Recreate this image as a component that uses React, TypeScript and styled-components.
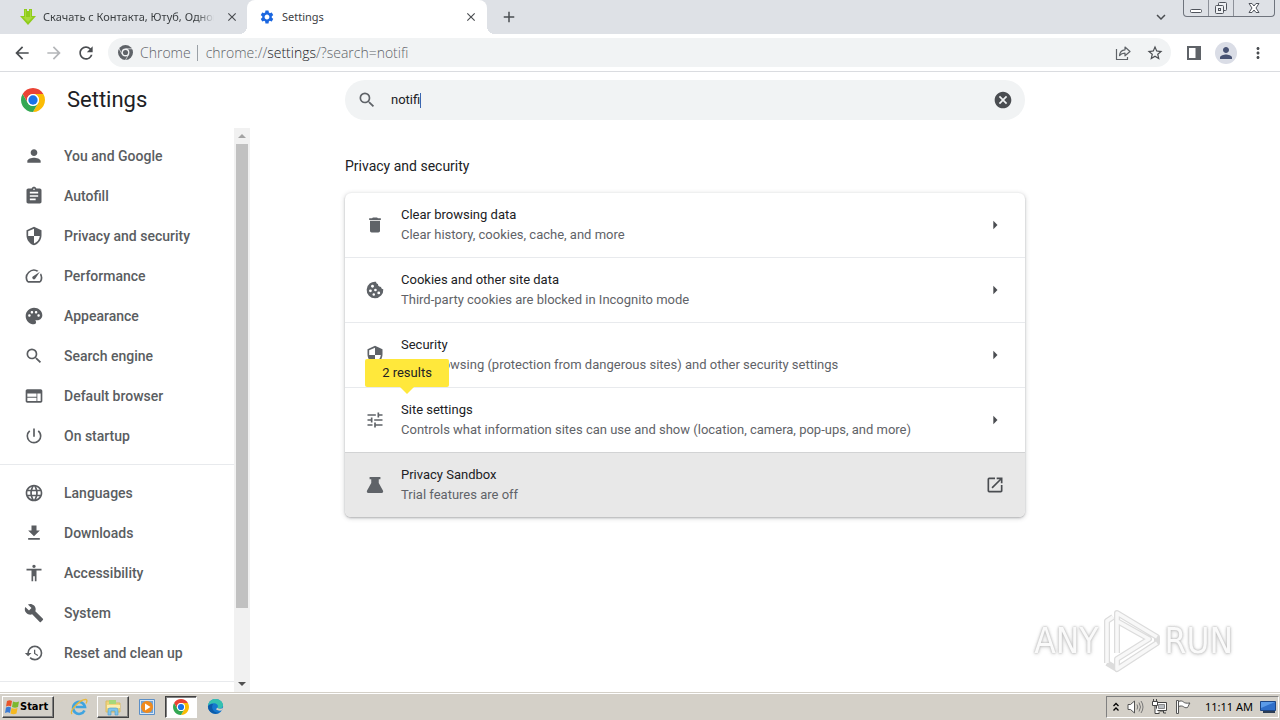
import React from "react";
import styled, { createGlobalStyle, css } from "styled-components";
import {
  MdAccessibility,
  MdAdd,
  MdArrowBack,
  MdArrowForward,
  MdArrowRight,
  MdAssignment,
  MdBuild,
  MdCancel,
  MdClose,
  MdDelete,
  MdExpandMore,
  MdFileDownload,
  MdHistory,
  MdLanguage,
  MdMoreVert,
  MdOpenInNew,
  MdPalette,
  MdPerson,
  MdPowerSettingsNew,
  MdRefresh,
  MdSearch,
  MdSecurity,
  MdSettings,
  MdSpeed,
  MdStarBorder,
  MdTune,
  MdWeb,
} from "react-icons/md";

const GlobalStyle = createGlobalStyle`
  *, *::before, *::after { box-sizing: border-box; }
  body {
    margin: 0;
    background: #fff;
    font-family: Roboto, "Liberation Sans", sans-serif;
    color: #202124;
  }
  button, input { font: inherit; color: inherit; }
  button { border: 0; padding: 0; background: none; cursor: pointer; }
  h1, h2, p, ul { margin: 0; padding: 0; font-weight: 400; }
  ul { list-style: none; }
  a { color: inherit; text-decoration: none; }
  svg { display: block; flex: none; }
`;

const uiFont = `"Noto Sans", "Open Sans", sans-serif`;

const Desktop = styled.div`
  height: 100vh;
  display: flex;
  flex-direction: column;
  overflow: hidden;
`;

/* Tab strip */
const TabStrip = styled.div`
  display: flex;
  flex: none;
  height: 34px;
  background: #dee1e6;
  font-family: ${uiFont};
`;

const Tab = styled.div<{ $active?: boolean }>`
  position: relative;
  display: flex;
  align-items: center;
  gap: 7px;
  width: ${(p) => (p.$active ? 240 : 247)}px;
  padding: 0 8px 0 ${(p) => (p.$active ? 12 : 20)}px;
  border-radius: 8px 8px 0 0;
  font-size: 11px;
  line-height: 16px;
  color: #3c4043;
  ${(p) =>
    p.$active &&
    css`
      background: #fff;
      &::before,
      &::after {
        content: "";
        position: absolute;
        bottom: 0;
        width: 8px;
        height: 8px;
      }
      &::before {
        right: 100%;
        background: radial-gradient(circle at 0 0, #dee1e6 8px, #fff 8px);
      }
      &::after {
        left: 100%;
        background: radial-gradient(circle at 100% 0, #dee1e6 8px, #fff 8px);
      }
    `}
`;

const TabTitle = styled.span<{ $fade?: boolean }>`
  flex: 1;
  min-width: 0;
  overflow: hidden;
  white-space: nowrap;
  ${(p) => p.$fade && "mask-image: linear-gradient(to right, #000 88%, transparent 98%);"}
`;

const GlyphButton = styled.button<{ $size?: number }>`
  display: flex;
  align-items: center;
  justify-content: center;
  flex: none;
  width: ${(p) => p.$size ?? 32}px;
  height: ${(p) => p.$size ?? 32}px;
  color: #4a4d51;
`;

const TabTools = styled.div`
  display: flex;
  flex: 1;
  align-items: center;
  justify-content: space-between;
  padding: 0 6px;
`;

const WindowControls = styled.div`
  display: flex;
  flex: none;
  width: 92px;
  height: 17px;
  margin-right: 5px;
  border: 1px solid #6f747d;
  border-top: 0;
  border-radius: 0 0 4px 4px;
`;

const WindowButton = styled.button<{ $wide?: boolean }>`
  display: flex;
  align-items: center;
  justify-content: center;
  flex: ${(p) => (p.$wide ? 5 : 3)};
  & + & {
    border-left: 1px solid #8d9199;
  }
`;

/* Address bar */
const Toolbar = styled.div`
  display: flex;
  flex: none;
  align-items: center;
  height: 38px;
  padding: 0 6px;
  border-bottom: 1px solid #dadce0;
`;

const Omnibox = styled.div`
  display: flex;
  flex: 1;
  align-items: center;
  height: 29px;
  margin: 0 7px 0 6px;
  padding-left: 10px;
  border-radius: 15px;
  background: #f1f3f4;
  font-family: "Open Sans", "Noto Sans", sans-serif;
  font-weight: 300;
  font-size: 14px;
  line-height: 20px;
  color: #5f6368;
`;

const SiteLabel = styled.span`
  margin-left: 7px;
  padding-right: 6px;
  border-right: 1px solid #9aa0a6;
  line-height: 16px;
`;

const Address = styled.div`
  flex: 1;
  padding-left: 8px;
  outline: 0;
  white-space: nowrap;
  b {
    font-weight: 300;
    color: #202124;
  }
`;

const Avatar = styled.span`
  display: flex;
  align-items: center;
  justify-content: center;
  width: 22px;
  height: 22px;
  border-radius: 50%;
  background: #dadde6;
  color: #475273;
`;

/* Settings page */
const Page = styled.div`
  display: flex;
  flex: 1;
  min-height: 0;
`;

const Sidebar = styled.aside`
  display: flex;
  flex-direction: column;
  flex: none;
  width: 250px;
`;

const Brand = styled.header`
  display: flex;
  align-items: center;
  gap: 22px;
  flex: none;
  height: 56px;
  padding-left: 21px;
`;

const BrandTitle = styled.h1`
  font-size: 22px;
  line-height: 32px;
`;

const MenuArea = styled.div`
  display: flex;
  flex: 1;
  min-height: 0;
`;

const Menu = styled.nav`
  flex: 1;
  overflow: hidden;
`;

const MenuGroup = styled.ul`
  padding: 8px 0;
  border-bottom: 1px solid #e8eaed;
`;

const MenuLink = styled.a`
  display: flex;
  align-items: center;
  gap: 20px;
  height: 40px;
  padding-left: 24px;
  font-size: 14px;
  font-weight: 500;
  line-height: 20px;
  color: #5a5d61;
`;

const ScrollTrack = styled.div`
  display: flex;
  flex-direction: column;
  flex: none;
  width: 16px;
  padding: 0 2px;
  background: #f1f1f1;
`;

const ScrollArrow = styled.button`
  display: flex;
  align-items: center;
  justify-content: center;
  height: 16px;
`;

const ScrollThumb = styled.div`
  flex: 464;
  background: #c1c1c1;
`;

const ScrollRest = styled.div`
  flex: 68;
`;

const Main = styled.main`
  display: grid;
  grid-template-columns: 95fr minmax(0, 680px) 255fr;
  flex: 1;
  align-content: start;
  padding-top: 8px;
`;

const Column = styled.div`
  grid-column: 2;
`;

const SearchField = styled.label`
  display: flex;
  align-items: center;
  height: 40px;
  padding: 0 12px;
  border-radius: 20px;
  background: #f1f3f4;
  color: #5f6368;
`;

const SearchInput = styled.input`
  field-sizing: content;
  margin-left: 14px;
  padding: 0;
  border: 0;
  outline: 0;
  background: none;
  font-size: 13px;
  line-height: 20px;
  color: #202124;
`;

const Caret = styled.span`
  width: 1px;
  height: 15px;
  margin-right: auto;
  background: #3b66b0;
`;

const SectionTitle = styled.h2`
  padding: 36px 0 16px;
  font-size: 14px;
  line-height: 21px;
`;

const Card = styled.ul`
  border-radius: 6px;
  box-shadow: 0 1px 2px rgba(60, 64, 67, 0.3), 0 1px 4px 1px rgba(60, 64, 67, 0.16);
`;

const Row = styled.li<{ $hovered?: boolean }>`
  position: relative;
  display: flex;
  align-items: center;
  padding: 12px 20px;
  color: #5f6368;
  & + & {
    border-top: 1px solid #e8eaed;
  }
  ${(p) =>
    p.$hovered &&
    css`
      background: #e8e8e8;
      border-radius: 0 0 6px 6px;
      && {
        border-color: #d2d3d4;
      }
    `}
`;

const RowText = styled.a`
  flex: 1;
  margin-left: 16px;
  font-size: 13px;
  line-height: 20px;
`;

const RowTitle = styled.p`
  color: #202124;
`;

const Bubble = styled.div`
  position: absolute;
  left: 20px;
  bottom: 100%;
  z-index: 1;
  min-width: 84px;
  margin-bottom: 1px;
  padding: 4px 12px;
  border-radius: 2px;
  background: #ffe83b;
  color: #202124;
  font-size: 13px;
  line-height: 20px;
  text-align: center;
  &::after {
    content: "";
    position: absolute;
    top: 100%;
    left: 50%;
    margin-left: -7px;
    border: 7px solid transparent;
    border-top-color: #ffe83b;
    border-bottom: 0;
  }
`;

const Watermark = styled.div`
  position: fixed;
  right: 47px;
  bottom: 46px;
  display: flex;
  align-items: center;
  gap: 4px;
  font-family: "DejaVu Sans Condensed", "DejaVu Sans", sans-serif;
  font-size: 35px;
  line-height: 66px;
  color: #fafafa;
  text-shadow: 0 0 2px #bdbdbd, 0 0 3px #c8c8c8, 0 1px 4px #d4d4d4;
`;

/* Taskbar */
const Taskbar = styled.footer`
  display: flex;
  align-items: center;
  flex: none;
  height: 28px;
  padding: 1px 1px 1px 2px;
  border-top: 1px solid #d4d0c8;
  background: #d4d0c8;
  box-shadow: inset 0 1px #fff;
  font-family: ${uiFont};
  font-size: 11px;
  line-height: 16px;
  color: #000;
`;

const raised = css`
  border: 1px solid;
  border-color: #fff #404040 #404040 #fff;
  box-shadow: inset -1px -1px #808080;
`;

const StartButton = styled.button`
  ${raised}
  display: flex;
  align-items: center;
  width: 52px;
  height: 22px;
  padding-left: 1px;
  font-family: "DejaVu Sans Condensed", "DejaVu Sans", sans-serif;
  font-weight: 700;
`;

const Launchers = styled.div`
  display: flex;
  flex: 1;
  gap: 2px;
  margin-left: 9px;
`;

const Launcher = styled.button<{ $state?: "open" | "active" }>`
  display: flex;
  align-items: center;
  justify-content: center;
  width: 32px;
  height: 22px;
  ${(p) => p.$state === "open" && raised}
  ${(p) =>
    p.$state === "active" &&
    css`
      background: #fff;
      border: 1px solid;
      border-color: #404040 #fff #fff #404040;
      box-shadow: inset 1px 1px #808080;
    `}
`;

const Tray = styled.div`
  display: flex;
  align-items: center;
  gap: 7px;
  height: 22px;
  padding: 0 2px 0 5px;
  border: 1px solid;
  border-color: #808080 #fff #fff #808080;
`;

const Clock = styled.time`
  margin-left: 6px;
`;

function ChromeLogo({ size }: { size: number }) {
  return (
    <svg width={size} height={size} viewBox="2 2 44 44">
      <path fill="#ea4335" d="M14.47 29.5 4.95 13A22 22 0 0 1 43.05 13H24a11 11 0 0 0-9.53 16.5z" />
      <path fill="#fbbc05" d="M24 13h19.05A22 22 0 0 1 24 46l9.53-16.5A11 11 0 0 0 24 13z" />
      <path fill="#34a853" d="M33.53 29.5 24 46A22 22 0 0 1 4.95 13l9.52 16.5a11 11 0 0 0 19.06 0z" />
      <circle cx="24" cy="24" r="11" fill="#fff" />
      <circle cx="24" cy="24" r="8.5" fill="#1a73e8" />
    </svg>
  );
}

function ChromeMono() {
  return (
    <svg width="15" height="15" viewBox="2 2 44 44" fill="#5f6368">
      <circle cx="24" cy="24" r="22" />
      <path fill="none" stroke="#f1f3f4" strokeWidth="2" d="M24 13h21M33.53 29.5 23 47.7M14.47 29.5 4 11.3" />
      <circle cx="24" cy="24" r="11.500" fill="#f1f3f4" />
      <circle cx="24" cy="24" r="7.500" />
    </svg>
  );
}

function DownloadFavicon() {
  return (
    <svg width="16" height="16" viewBox="0 0 16 16">
      <path d="M4 0h3v2h2V0h3v7h4l-8 9-8-9h4z" fill="#8fcc1c" />
      <path d="M5 1h1v7h4V1h1v7h2l-5 5-5-5h2z" fill="#a9da3a" />
    </svg>
  );
}

function FlaskIcon() {
  return (
    <svg width="20" height="20" viewBox="0 0 24 24" fill="currentColor">
      <path d="M5.5 2.5h13V5h-2v4.5l5 9.2c.8 1.5 0 2.8-1.5 2.8H4c-1.5 0-2.3-1.3-1.5-2.8l5-9.2V5h-2z" />
    </svg>
  );
}

function CookieIcon() {
  return (
    <svg width="20" height="20" viewBox="0 0 24 24">
      <path
        fill="currentColor"
        d="M21.950 11.200c-1.700-.2-2.750-1.400-2.650-3-2 .4-4-1.100-3.700-3.300-1.500-.3-2.400-1.400-2.300-2.850A10 10 0 1 0 21.950 11.200z"
      />
      <g fill="#fff">
        <circle cx="9" cy="7.500" r="1.700" />
        <circle cx="6.500" cy="13" r="1.700" />
        <circle cx="12.500" cy="12" r="1.600" />
        <circle cx="10.500" cy="17.500" r="1.500" />
        <circle cx="16.500" cy="15.500" r="1.700" />
      </g>
    </svg>
  );
}

function ShareIcon() {
  return (
    <svg width="16" height="16" viewBox="0 0 16 16" fill="none" stroke="#5f6368" strokeWidth="1.2" strokeLinejoin="round">
      <path d="M1.500 4v10.500h11V12" />
      <path d="M4.500 10.500c.3-3.500 2-5.500 5.500-5.700V2l5 4.500-5 4.300V8.200c-2.500 0-4.200.7-5.500 2.300z" />
    </svg>
  );
}

function PlayMark() {
  return (
    <svg width="58" height="64" viewBox="0 0 58 64" fill="none" strokeLinejoin="round">
      <g stroke="#dcdcdc" strokeWidth="6">
        <path d="M14 44V4l40 24v6L14 60V50l32-20L14 12M4 54V12l6-4M4 54l10 6" />
      </g>
      <g stroke="#f8f8f8" strokeWidth="3.500">
        <path d="M14 44V4l40 24M54 34 14 60V50l32-20L14 12M4 54V12l6-4" />
      </g>
    </svg>
  );
}

function WindowsFlag() {
  return (
    <svg width="16" height="16" viewBox="0 0 16 16">
      <path d="M3 2c2-1 3.500-1 5 0L7 7.500c-1.500-1-3-1-5 0z" fill="#e8552b" />
      <path d="M9 2.500c2 1 4 1 6 0L14 8c-2 1-4 1-6 0z" fill="#7cb82f" />
      <path d="M2 8.500c2-1 3.500-1 5 0L6 14c-1.500-1-3-1-5 0z" fill="#3a7bd5" />
      <path d="M7.500 9c2 1 4 1 6 0l-1 5.500c-2 1-4 1-6 0z" fill="#f5b921" />
    </svg>
  );
}

function ExplorerE() {
  return (
    <svg width="18" height="18" viewBox="0 0 18 18" fill="none">
      <path d="M14.500 12.500A6 6 0 1 1 15 9H5.500" stroke="#3fa4e0" strokeWidth="2.600" />
      <path d="M2 16C-1 13 10 1 16 1.500c1.500.3 1 2.500 0 4" stroke="#e8b83a" strokeWidth="1.300" />
    </svg>
  );
}

function FolderIcon() {
  return (
    <svg width="18" height="18" viewBox="0 0 18 18">
      <path d="M2 3h5l1 2h8v9H2z" fill="#f0d479" stroke="#d9bb62" />
      <path d="M5 2h7v4H5z" fill="#a6d87a" />
      <path d="M3 7h13v3H3z" fill="#fbeeb0" />
      <path d="M4 17v-5q0-2 2-2h6q2 0 2 2v5h-3v-4H7v4z" fill="#7fc4ea" stroke="#4c9ccf" strokeWidth=".6" />
    </svg>
  );
}

function MediaIcon() {
  return (
    <svg width="16" height="16" viewBox="0 0 16 16">
      <path d="M.5.500h15v15H.5z" fill="#d6e6f5" stroke="#5b8fc7" />
      <path d="M2 2h12v12H2z" fill="#6fa3d8" />
      <circle cx="8" cy="8" r="6" fill="#f08a1c" />
      <path d="M6 4.500v7L11.500 8z" fill="#fff" />
    </svg>
  );
}

function EdgeIcon() {
  return (
    <svg width="17" height="17" viewBox="0 0 18 18">
      <circle cx="9" cy="9" r="8" fill="#1578cf" />
      <path d="M1 8.500C1.500 3.500 5 1 9 1c5 0 8 3.500 8 6.500 0 2.500-2 3.800-4 3.800-1.500 0-2.300-.5-1.800-1.300C12.500 7.500 10 5.500 7 5.500c-3 0-5 1.500-6 3z" fill="#35c1b0" />
      <path d="M1 9c1-2 3.500-3 5.500-2.500C5 8 5 11 7 13.500c1.500 2 4.500 2.300 7 1.300A8 8 0 0 1 1 9z" fill="#0d5aa8" />
      <path d="M10.800 10.300c1.500 1.500 4 1.300 6.200.2l-1 2.500c-2 1-5 .5-6.500-1z" fill="#d4d0c8" />
    </svg>
  );
}

function SpeakerIcon() {
  return (
    <svg width="17" height="16" viewBox="0 0 17 16" fill="none" stroke="#777">
      <path d="M1 5.500h2.500L7.500 2v12l-4-3.500H1z" fill="#fff" stroke="#555" />
      <path d="M10 5.500q1.500 2.500 0 5M12 3.500q3 4.500 0 9M14 2q4 6 0 12" />
    </svg>
  );
}

function NetworkIcon() {
  return (
    <svg width="17" height="16" viewBox="0 0 17 16" fill="#fff" stroke="#444">
      <path d="M5.500 3.500h10v8h-10z" />
      <path d="M7.500 5.500h6v4h-6z" fill="#b9bdc2" stroke="#888" />
      <path d="M8.500 12h4v2h2.500M9 14H6.500" fill="none" />
      <path d="M1.500 2.500h5v4h-5zM2.500 0v2M5.500 0v2M4 7v7.500h4" />
    </svg>
  );
}

function FlagIcon() {
  return (
    <svg width="17" height="16" viewBox="0 0 17 16" fill="#fff" stroke="#555">
      <path d="M3.500 2.500c2-1 4-.5 5 .5s3 1.500 6.500 1c-1 1-1.500 3-2.500 4.500-2 .5-3 0-4-.8s-3-1-5-.2z" />
      <path d="M1.500 1.500h2v13h-2z" />
    </svg>
  );
}

function MonitorIcon() {
  return (
    <svg width="16" height="14" viewBox="0 0 16 14">
      <path d="M.5 1.500h15v9H.5z" fill="#2f6fc9" stroke="#1d4685" />
      <path d="M1 2h14L1 8z" fill="#5b9be8" />
      <path d="M3 12h12" stroke="#2b3d55" strokeWidth="2" />
    </svg>
  );
}

const menuGroups = [
  [
    { label: "You and Google", Icon: MdPerson },
    { label: "Autofill", Icon: MdAssignment },
    { label: "Privacy and security", Icon: MdSecurity },
    { label: "Performance", Icon: MdSpeed },
    { label: "Appearance", Icon: MdPalette },
    { label: "Search engine", Icon: MdSearch },
    { label: "Default browser", Icon: MdWeb },
    { label: "On startup", Icon: MdPowerSettingsNew },
  ],
  [
    { label: "Languages", Icon: MdLanguage },
    { label: "Downloads", Icon: MdFileDownload },
    { label: "Accessibility", Icon: MdAccessibility },
    { label: "System", Icon: MdBuild },
    { label: "Reset and clean up", Icon: MdHistory },
  ],
];

const rows = [
  { title: "Clear browsing data", note: "Clear history, cookies, cache, and more", icon: <MdDelete size={20} /> },
  { title: "Cookies and other site data", note: "Third-party cookies are blocked in Incognito mode", icon: <CookieIcon /> },
  { title: "Security", note: "Safe Browsing (protection from dangerous sites) and other security settings", icon: <MdSecurity size={20} /> },
  {
    title: "Site settings",
    note: "Controls what information sites can use and show (location, camera, pop-ups, and more)",
    icon: <MdTune size={20} />,
    results: "2 results",
  },
  { title: "Privacy Sandbox", note: "Trial features are off", icon: <FlaskIcon />, external: true },
];

export default function App() {
  return (
    <Desktop>
      <GlobalStyle />
      <TabStrip>
        <Tab>
          <DownloadFavicon />
          <TabTitle $fade>Скачать с Контакта, Ютуб, Одноклассники</TabTitle>
          <GlyphButton $size={14} aria-label="Close tab">
            <MdClose size={14} />
          </GlyphButton>
        </Tab>
        <Tab $active>
          <MdSettings size={16} color="#1a66e0" />
          <TabTitle>Settings</TabTitle>
          <GlyphButton $size={16} aria-label="Close tab">
            <MdClose size={14} />
          </GlyphButton>
        </Tab>
        <TabTools>
          <GlyphButton aria-label="New tab">
            <MdAdd size={18} />
          </GlyphButton>
          <GlyphButton aria-label="Search tabs">
            <MdExpandMore size={18} />
          </GlyphButton>
        </TabTools>
        <WindowControls>
          <WindowButton aria-label="Minimize">
            <svg width="14" height="14" viewBox="0 0 14 14" fill="#fff" stroke="#50545c">
              <rect x="1.500" y="8.500" width="11" height="3" rx="1" />
            </svg>
          </WindowButton>
          <WindowButton aria-label="Restore">
            <svg width="14" height="14" viewBox="0 0 14 14" fill="#eef0f3" stroke="#50545c">
              <rect x="4.500" y="1.500" width="8" height="8" rx="1" />
              <rect x="1.500" y="4.500" width="8" height="8" rx="1" />
              <rect x="4.500" y="7.500" width="2" height="2" />
            </svg>
          </WindowButton>
          <WindowButton $wide aria-label="Close">
            <svg width="12" height="12" viewBox="0 0 12 12" fill="#fff" stroke="#50545c">
              <path d="M1 1.500h3l2 2.500 2-2.500h3L8 6l3 4.500H8L6 8l-2 2.500H1L4 6z" />
            </svg>
          </WindowButton>
        </WindowControls>
      </TabStrip>

      <Toolbar>
        <GlyphButton aria-label="Back">
          <MdArrowBack size={20} />
        </GlyphButton>
        <GlyphButton aria-label="Forward" disabled>
          <MdArrowForward size={20} color="#b4b6b9" />
        </GlyphButton>
        <GlyphButton aria-label="Reload">
          <MdRefresh size={20} />
        </GlyphButton>
        <Omnibox>
          <ChromeMono />
          <SiteLabel>Chrome</SiteLabel>
          <Address role="textbox" aria-label="Address" contentEditable suppressContentEditableWarning spellCheck={false}>
            chrome://<b>settings</b>/?search=notifi
          </Address>
          <GlyphButton aria-label="Share">
            <ShareIcon />
          </GlyphButton>
          <GlyphButton aria-label="Bookmark this tab">
            <MdStarBorder size={18} />
          </GlyphButton>
        </Omnibox>
        <GlyphButton aria-label="Side panel">
          <svg width="14" height="14" viewBox="0 0 14 14">
            <path d="M1 1h12v12H1z" fill="none" stroke="#5f6368" strokeWidth="2" />
            <path d="M8.500 0H14v14H8.500z" fill="#5f6368" />
          </svg>
        </GlyphButton>
        <GlyphButton aria-label="Profile">
          <Avatar>
            <MdPerson size={18} />
          </Avatar>
        </GlyphButton>
        <GlyphButton aria-label="Menu">
          <MdMoreVert size={18} />
        </GlyphButton>
      </Toolbar>

      <Page>
        <Sidebar>
          <Brand>
            <ChromeLogo size={24} />
            <BrandTitle>Settings</BrandTitle>
          </Brand>
          <MenuArea>
            <Menu>
              {menuGroups.map((group, i) => (
                <MenuGroup key={i}>
                  {group.map(({ label, Icon }) => (
                    <li key={label}>
                      <MenuLink href="#">
                        <Icon size={20} />
                        {label}
                      </MenuLink>
                    </li>
                  ))}
                </MenuGroup>
              ))}
            </Menu>
            <ScrollTrack>
              <ScrollArrow aria-label="Scroll up">
                <svg width="8" height="4" viewBox="0 0 8 4">
                  <path d="M0 4l4-4 4 4z" fill="#a3a3a3" />
                </svg>
              </ScrollArrow>
              <ScrollThumb />
              <ScrollRest />
              <ScrollArrow aria-label="Scroll down">
                <svg width="8" height="4" viewBox="0 0 8 4">
                  <path d="M0 0l4 4 4-4z" fill="#505050" />
                </svg>
              </ScrollArrow>
            </ScrollTrack>
          </MenuArea>
        </Sidebar>

        <Main>
          <Column>
            <SearchField>
              <MdSearch size={20} />
              <SearchInput aria-label="Search settings" defaultValue="notifi" size={6} />
              <Caret />
              <GlyphButton $size={20} aria-label="Clear search">
                <MdCancel size={20} />
              </GlyphButton>
            </SearchField>
            <SectionTitle>Privacy and security</SectionTitle>
            <Card>
              {rows.map((row) => (
                <Row key={row.title} $hovered={row.external}>
                  {row.icon}
                  <RowText href="#">
                    <RowTitle>{row.title}</RowTitle>
                    <p>{row.note}</p>
                  </RowText>
                  <GlyphButton $size={20} aria-label={`Open ${row.title}`}>
                    {row.external ? <MdOpenInNew size={20} /> : <MdArrowRight size={20} />}
                  </GlyphButton>
                  {row.results && <Bubble>{row.results}</Bubble>}
                </Row>
              ))}
            </Card>
          </Column>
        </Main>
      </Page>

      <Watermark>
        <span>ANY</span>
        <PlayMark />
        <span>RUN</span>
      </Watermark>

      <Taskbar>
        <StartButton>
          <WindowsFlag />
          Start
        </StartButton>
        <Launchers>
          <Launcher aria-label="Internet Explorer">
            <ExplorerE />
          </Launcher>
          <Launcher aria-label="Windows Explorer" $state="open">
            <FolderIcon />
          </Launcher>
          <Launcher aria-label="Media Player">
            <MediaIcon />
          </Launcher>
          <Launcher aria-label="Google Chrome" $state="active">
            <ChromeLogo size={16} />
          </Launcher>
          <Launcher aria-label="Microsoft Edge">
            <EdgeIcon />
          </Launcher>
        </Launchers>
        <Tray>
          <svg width="8" height="10" viewBox="0 0 8 10" fill="none" stroke="#000" strokeWidth="1.300">
            <path d="M1.500 4 4 1.500 6.500 4M1.500 8.500 4 6l2.500 2.500" />
          </svg>
          <SpeakerIcon />
          <NetworkIcon />
          <FlagIcon />
          <Clock>11:11 AM</Clock>
          <MonitorIcon />
        </Tray>
      </Taskbar>
    </Desktop>
  );
}
